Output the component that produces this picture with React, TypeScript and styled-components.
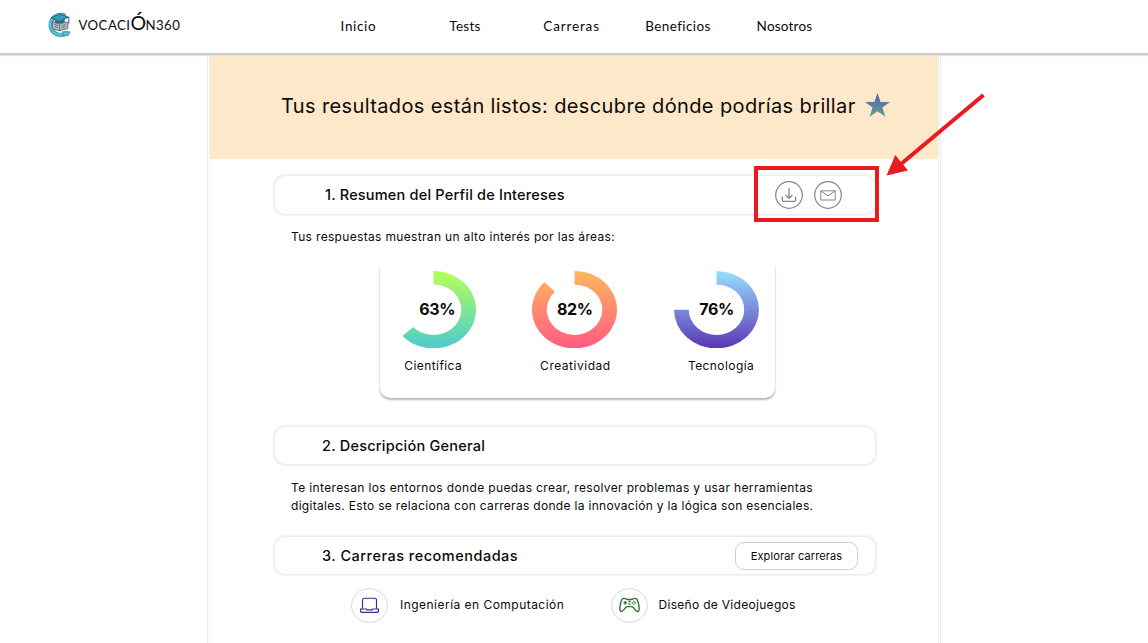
import React from 'react';
import styled, { createGlobalStyle } from 'styled-components';

const GlobalStyle = createGlobalStyle`
  * { box-sizing: border-box; }
  body {
    margin: 0;
    background: #fff;
    color: #0a0a0a;
    font-family: Inter, "Open Sans", sans-serif;
    overflow: hidden;
  }
`;

const Page = styled.div`
  position: relative;
  height: 643px;
  overflow: hidden;
`;

const Header = styled.header`
  position: relative;
  z-index: 1;
  display: flex;
  height: 53px;
  background: #fff;
  box-shadow: 0 1px 0 #cacaca, 0 2px 0 #cdcdcd, 0 3px 1px #e4e4e4;
`;

const Brand = styled.div`
  display: flex;
  width: 340.6px;
  padding-left: 46px;
`;

const BrandMark = styled.svg`
  width: 26px;
  height: 27px;
  margin-top: 10.5px;
`;

const BrandName = styled.div`
  margin: 11px 0 0 6.5px;
  font: 400 13.2px/24px Lato, sans-serif;
  letter-spacing: 0.45px;
  white-space: nowrap;
`;

const BigLetter = styled.span`
  font-size: 19.5px;
  letter-spacing: -0.6px;
`;

const Nav = styled.nav`
  display: grid;
  grid-template-columns: 108.7px 94px 102px 111.3px 80px;
  align-items: center;
  height: 52px;
`;

const NavLink = styled.a<{ $track: number }>`
  font: 400 13.5px/20px Lato, sans-serif;
  letter-spacing: ${(p) => p.$track}px;
  white-space: nowrap;
`;

const Sheet = styled.main`
  width: 734px;
  height: 590px;
  margin-left: 207px;
  border: solid #ececec;
  border-width: 0 1px;
  padding: 3px 2px 0;
`;

const SheetInner = styled.div`
  height: 587px;
  box-shadow: -1px 0 0 #f1f1f1, 1px 0 0 #f1f1f1;
`;

const Banner = styled.section`
  display: flex;
  align-items: center;
  height: 102.5px;
  padding: 0 0 3px 71px;
  background: #fee8ca;
`;

const Title = styled.h1`
  margin: 1px 0 0;
  font-size: 20px;
  font-weight: 400;
  line-height: 28px;
  letter-spacing: 0.38px;
  white-space: nowrap;
`;

const Star = styled.svg`
  width: 25px;
  height: 24px;
  margin: -2px 0 0 9px;
`;

const Content = styled.div`
  padding: 17.5px 63.5px 0 65px;
`;

const SectionBar = styled.section`
  display: flex;
  align-items: center;
  height: 37.5px;
  padding-right: 16.5px;
  border-radius: 10px;
  background: #fff;
  box-shadow: 0 0 3px 0.5px #e2e2e2;
`;

const Heading = styled.h2<{ $indent: number; $track: number }>`
  flex: 1;
  margin: 0;
  padding-left: ${(p) => p.$indent}px;
  font-size: 14.5px;
  font-weight: 500;
  line-height: 20px;
  letter-spacing: ${(p) => p.$track}px;
`;

const Actions = styled.div`
  display: flex;
  gap: 11.6px;
  padding-right: 15.8px;
`;

const ActionIcon = styled.svg`
  width: 28px;
  height: 28px;
  fill: none;
  stroke: #858585;
`;

const Paragraph = styled.p`
  margin: 14.4px 0 0 16px;
  font-size: 12px;
  line-height: 18px;
  white-space: nowrap;
`;

const Line = styled.span<{ $track: number }>`
  display: block;
  letter-spacing: ${(p) => p.$track}px;
`;

const ChartCard = styled.section`
  display: grid;
  grid-template-columns: 141.7px 141.7px 112px;
  width: 395.4px;
  height: 134px;
  margin: 18.1px 0 29px 104.5px;
  padding-top: 6px;
  border-radius: 3px 3px 10px 10px;
  box-shadow: 0 2px 2px #b9b9b9, 0 1px 2px #d8d8d8;
  clip-path: inset(2px -6px -8px -6px);
`;

const Metric = styled.div`
  display: flex;
  flex-direction: column;
  align-items: center;
  width: 107.4px;
`;

const Dial = styled.div`
  display: grid;
  place-items: center;
  width: 85px;
  height: 79px;
`;

const Ring = styled.svg`
  grid-area: 1 / 1;
  width: 85px;
  height: 77.4px;
`;

const Percent = styled.strong<{ $shift: number }>`
  grid-area: 1 / 1;
  padding-left: ${(p) => p.$shift}px;
  font-size: 16px;
  line-height: 20px;
  font-weight: 700;
  letter-spacing: -0.4px;
`;

const MetricLabel = styled.span<{ $track: number; $shift?: number }>`
  margin-top: 8px;
  padding-left: ${(p) => p.$shift ?? 0}px;
  font-size: 12px;
  line-height: 18px;
  letter-spacing: ${(p) => p.$track}px;
`;

const Gap = styled.div`
  height: 22px;
`;

const OutlineButton = styled.button`
  width: 123px;
  height: 28px;
  padding: 0;
  border: 1px solid #cfcfcf;
  border-radius: 9px;
  background: #fff;
  color: #0a0a0a;
  font: 400 11px/16px Inter, sans-serif;
  letter-spacing: 0.12px;
`;

const Careers = styled.div`
  display: grid;
  grid-template-columns: 260px 1fr;
  padding: 12px 0 0 76px;
`;

const Career = styled.div<{ $track: number; $gap: number }>`
  display: flex;
  align-items: center;
  gap: ${(p) => p.$gap}px;
  font-size: 12px;
  line-height: 18px;
  letter-spacing: ${(p) => p.$track}px;
  white-space: nowrap;
`;

const CareerIcon = styled.svg`
  width: 37px;
  height: 35px;
  margin-top: 2px;
  fill: none;
`;

const Callout = styled.div`
  position: absolute;
  z-index: 2;
  left: 754px;
  top: 166px;
  width: 125px;
  height: 56px;
  border: 4px solid #ea1b1f;
`;

const CalloutArrow = styled.svg`
  position: absolute;
  z-index: 2;
  left: 880px;
  top: 88px;
  width: 110px;
  height: 92px;
`;

const navItems = [
  { label: 'Inicio', track: 0.65 },
  { label: 'Tests', track: 0.3 },
  { label: 'Carreras', track: 0.85 },
  { label: 'Beneficios', track: 0.4 },
  { label: 'Nosotros', track: 0.2 },
];

const metrics = [
  { id: 'sci', value: '63%', label: 'Científica', from: '#b6ff58', to: '#4dcbd0', angle: 227, track: 0.42, pct: 8, shift: 0 },
  { id: 'cre', value: '82%', label: 'Creatividad', from: '#ffb75e', to: '#ff5c83', angle: 315, track: 0.52, pct: 0, shift: 1 },
  { id: 'tec', value: '76%', label: 'Tecnología', from: '#97e0ff', to: '#5a36b5', angle: 270, track: 0.43, pct: 0, shift: 9 },
];

function ringPath(angle: number) {
  const a = (angle * Math.PI) / 180;
  const x = Math.sin(a);
  const y = -Math.cos(a);
  return `M50 0A50 50 0 1 1 ${50 + 50 * x} ${50 + 50 * y}L${50 + 32.6 * x} ${50 + 32.6 * y}A32.6 32.6 0 1 0 50 17.4Z`;
}

function Logo() {
  return (
    <BrandMark viewBox="0 0 25 26">
      <path d="M18.500 4.800A9.700 9.700 0 1 0 20.500 20.700" fill="none" stroke="#3b7080" strokeWidth="4" />
      <path d="M18.500 4.900A9.600 9.600 0 1 0 20 20.500" fill="none" stroke="#4cc3d8" strokeWidth="2.800" />
      <path d="M16 20h7l-1.500 3.500-5 .8z" fill="#4fc6d8" stroke="#346875" strokeWidth=".6" />
      <path d="M6 10.500l6.500 2 8.500-2v6.500l-8.500 2-6.500-2z" fill="#a9bec6" stroke="#4a5e69" strokeWidth=".8" />
      <path d="M13 12.500v6M8 13l3.500 1M8 15l3.500 1M15 14l4-1M15 16l4-1" stroke="#5d6f79" strokeWidth=".8" />
      <path d="M5 6.500l8-3.500 9 3-9 4z" fill="#2fa0b8" stroke="#214756" strokeWidth=".7" />
      <path d="M8.500 8.500v2.300l4.500 1.300 5-1.500V8.300l-5 2z" fill="#235c70" />
      <path d="M22 6v6" stroke="#33515d" strokeWidth=".9" />
    </BrandMark>
  );
}

function LaptopIcon() {
  return (
    <CareerIcon viewBox="0 0 37 35">
      <ellipse cx="18.500" cy="17.500" rx="18" ry="16.800" stroke="#d8d8d8" />
      <g stroke="#303285" strokeWidth="1.150">
        <path d="M11.500 20.800V12q0-1.800 1.800-1.800h10.400q1.800 0 1.800 1.800v8.800" />
        <path d="M9.500 21h5.800l.8.900h4.800l.8-.9h5.800v1.400q0 2-2 2h-14q-2 0-2-2z" />
      </g>
    </CareerIcon>
  );
}

function GamepadIcon() {
  return (
    <CareerIcon viewBox="0 0 37 35">
      <ellipse cx="18.500" cy="17.500" rx="17.800" ry="16.800" stroke="#d8d8d8" />
      <g stroke="#27742c" strokeWidth="1.350" strokeLinejoin="round">
        <path d="M11 11.200q2-1.600 4.200-.2.600.5 1.300.5h4q.7 0 1.300-.5 2.200-1.400 4.200.2 1.500 2.900 2.100 8.200.3 3.800-1.100 4.100-1.300.3-3.200-2.200l-1.700-2.100q-.7-.6-1.700-.6h-3.800q-1 0-1.700.6l-1.700 2.100q-1.900 2.500-3.200 2.200-1.400-.3-1.100-4.100.6-5.300 2.100-8.200z" />
        <path d="M14.200 13v3.600M12.400 14.800H16M22.800 12.800v1.200M22.800 15.600v1.200M20.800 14.800h1.200M23.600 14.800h1.200M17.500 13.500h2M17.500 16h2" />
      </g>
    </CareerIcon>
  );
}

export default function App() {
  return (
    <Page>
      <GlobalStyle />
      <Header>
        <Brand>
          <Logo />
          <BrandName>VOCACI<BigLetter>Ó</BigLetter>N360</BrandName>
        </Brand>
        <Nav>
          {navItems.map((n) => <NavLink key={n.label} $track={n.track}>{n.label}</NavLink>)}
        </Nav>
      </Header>
      <Sheet>
        <SheetInner>
          <Banner>
            <Title>Tus resultados están listos: descubre dónde podrías brillar</Title>
            <Star viewBox="0 0 25 24">
              <defs>
                <linearGradient id="star" x2="0" y2="1">
                  <stop stopColor="#5961ae" />
                  <stop offset="1" stopColor="#609f92" />
                </linearGradient>
              </defs>
              <path d="M12.500 0l3.100 8.900H25l-7.500 5.700 2.800 9.100-7.800-5.500-7.800 5.500 2.800-9.100L0 8.900h9.400z" fill="url(#star)" />
            </Star>
          </Banner>
          <Content>
            <SectionBar>
              <Heading $indent={50} $track={0.2}>1. Resumen del Perfil de Intereses</Heading>
              <Actions>
                <ActionIcon viewBox="0 0 28 28">
                  <circle cx="14" cy="14" r="13.300" strokeWidth="1.200" />
                  <path d="M14 7.200v10M10.600 14l3.400 3.400 3.400-3.400M7.400 15.500v3.800q0 1 1 1h11.200q1 0 1-1v-3.800" strokeWidth="1.300" />
                </ActionIcon>
                <ActionIcon viewBox="0 0 28 28">
                  <circle cx="14" cy="14" r="13.300" strokeWidth="1.200" />
                  <path d="M6.800 9.800h14.400v9.200H6.800zM7 10l7 4.800 7-4.800" strokeWidth="1" />
                </ActionIcon>
              </Actions>
            </SectionBar>
            <Paragraph>
              <Line $track={0.33}>Tus respuestas muestran un alto interés por las áreas:</Line>
            </Paragraph>
            <ChartCard>
              {metrics.map((m) => (
                <Metric key={m.id}>
                  <Dial>
                    <Ring viewBox="0 0 100 100" preserveAspectRatio="none">
                      <defs>
                        <linearGradient id={m.id} gradientUnits="userSpaceOnUse" x1="0" y1="0" x2="0" y2="100">
                          <stop stopColor={m.from} />
                          <stop offset="1" stopColor={m.to} />
                        </linearGradient>
                      </defs>
                      <path d={ringPath(m.angle)} fill={`url(#${m.id})`} />
                    </Ring>
                    <Percent $shift={m.pct}>{m.value}</Percent>
                  </Dial>
                  <MetricLabel $track={m.track} $shift={m.shift}>{m.label}</MetricLabel>
                </Metric>
              ))}
            </ChartCard>
            <SectionBar>
              <Heading $indent={47} $track={0.23}>2. Descripción General</Heading>
            </SectionBar>
            <Paragraph>
              <Line $track={0.36}>Te interesan los entornos donde puedas crear, resolver problemas y usar herramientas</Line>
              <Line $track={0.31}>digitales. Esto se relaciona con carreras donde la innovación y la lógica son esenciales.</Line>
            </Paragraph>
            <Gap />
            <SectionBar>
              <Heading $indent={47} $track={0.5}>3. Carreras recomendadas</Heading>
              <OutlineButton>Explorar carreras</OutlineButton>
            </SectionBar>
            <Careers>
              <Career $track={0.47} $gap={12}><LaptopIcon />Ingeniería en Computación</Career>
              <Career $track={0.3} $gap={10.5}><GamepadIcon />Diseño de Videojuegos</Career>
            </Careers>
          </Content>
        </SheetInner>
      </Sheet>
      <Callout />
      <CalloutArrow viewBox="880 88 110 92">
        <path d="M983.500 95L901 164" stroke="#ea1b1f" strokeWidth="4" />
        <path d="M886.500 175.500l8.800-20.500 12.700 15.500z" fill="#ea1b1f" />
      </CalloutArrow>
    </Page>
  );
}
